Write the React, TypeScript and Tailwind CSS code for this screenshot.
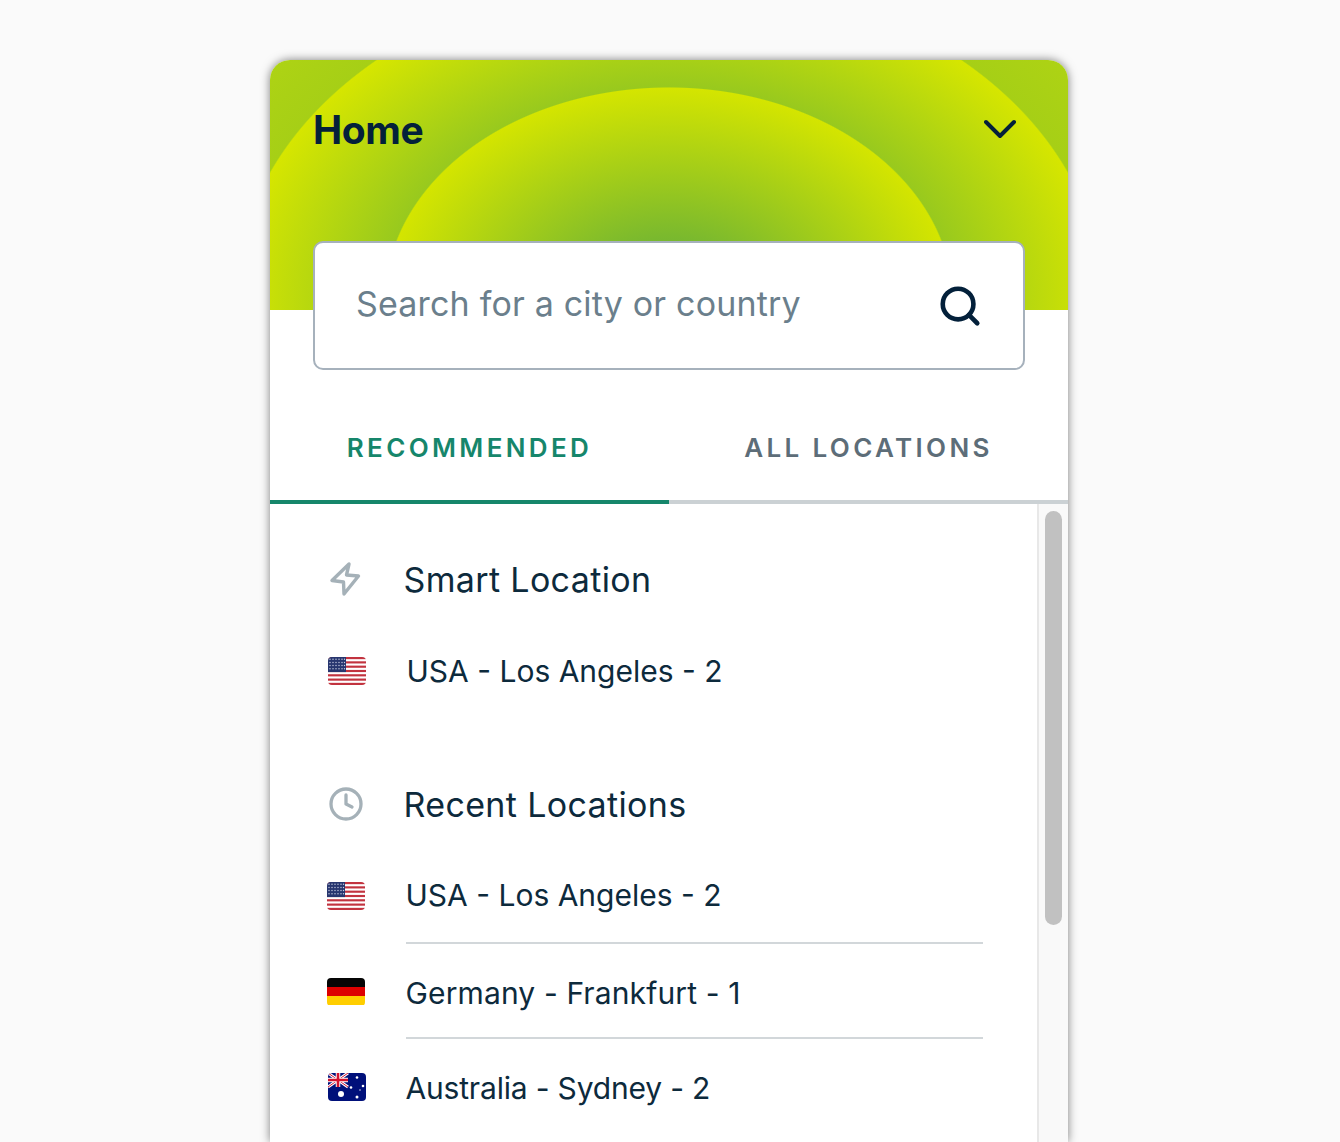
import { Clock, Search } from 'lucide-react'

function UsFlag() {
  const stripes = [0, 2, 4, 6, 8, 10, 12]
  return (
    <svg width="38" height="28" viewBox="0 0 38 26" preserveAspectRatio="none" className="rounded-[4px]">
      <rect width="38" height="26" fill="#fff" />
      {stripes.map((s) => (
        <rect key={s} y={s * 2} width="38" height="2" fill="#c2333f" />
      ))}
      <rect width="18" height="14" fill="#27366f" />
      {[2, 5, 8, 11].map((y) =>
        [2, 5, 8, 11, 14, 16.5].map((x) => <circle key={`${x}-${y}`} cx={x} cy={y} r="0.7" fill="#c9cfe2" />),
      )}
    </svg>
  )
}

function DeFlag() {
  return (
    <div className="flex h-[28px] w-[38px] flex-col overflow-hidden rounded-[4px]">
      <div className="flex-1 bg-[#050505]" />
      <div className="flex-1 bg-[#dd0000]" />
      <div className="flex-1 bg-[#ffce00]" />
    </div>
  )
}

function AuFlag() {
  return (
    <svg width="38" height="28" viewBox="0 0 38 28" className="rounded-[4px]">
      <rect width="38" height="28" fill="#00107a" />
      <path d="M0 0 20 14M20 0 0 14" stroke="#fff" strokeWidth="3" />
      <path d="M0 0 20 14M20 0 0 14" stroke="#d3122f" strokeWidth="1" />
      <path d="M10 0V14M0 7H20" stroke="#fff" strokeWidth="4.5" />
      <path d="M10 0V14M0 7H20" stroke="#d3122f" strokeWidth="2.6" />
      <circle cx="13" cy="21" r="3" fill="#fff" />
      <circle cx="29" cy="4.5" r="1.3" fill="#fff" />
      <circle cx="23" cy="14.5" r="1.3" fill="#fff" />
      <circle cx="35" cy="13" r="1.3" fill="#fff" />
      <circle cx="29" cy="24" r="1.5" fill="#fff" />
      <circle cx="32" cy="17" r="0.7" fill="#fff" />
    </svg>
  )
}

function Bolt() {
  return (
    <svg width="32" height="36" viewBox="0 0 32 36" fill="none">
      <path
        d="M20 3 3 19.5 14.5 21 15 33 29.5 15 17.5 14Z"
        stroke="#a5b1b8"
        strokeWidth="3.4"
        strokeLinejoin="round"
      />
    </svg>
  )
}

export default function App() {
  return (
    <div className="flex h-[1142px] justify-center overflow-hidden bg-[#fafafa] pt-[60px] pr-[2px] font-['Inter','Noto_Sans',sans-serif]">
      <div className="flex w-[798px] flex-col rounded-t-[20px] bg-white shadow-[0_0_10px_rgba(0,0,0,0.5)]">
        <div className="flex h-[250px] shrink-0 items-start justify-between rounded-t-[20px] bg-[radial-gradient(283px_212px_at_50%_240px,#5aa83a_0%,#78b82f_28%,#d4e500_100%,#98c91e_100.5%,#d6e600_153%,#a6cf16_153.5%,#b4d612_200%)] pt-[44px] pr-[52px] pl-[43px]">
          <h1 className="text-[39px] leading-[52px] font-bold tracking-[-0.4px] text-[#03203a]">Home</h1>
          <svg width="32" height="20" viewBox="0 0 32 20" fill="none" className="mt-[15px]">
            <path d="M2 3 16 17 30 3" stroke="#03203a" strokeWidth="4" strokeLinecap="round" strokeLinejoin="round" />
          </svg>
        </div>

        <div className="relative mx-[43px] -mt-[69px] flex h-[129px] shrink-0 items-center justify-between rounded-[10px] border-2 border-[#a6b1bc] bg-white pr-[40px] pl-[41px]">
          <span className="pb-[4px] text-[34px] tracking-[0.18px] text-[#6b7f8c]">Search for a city or country</span>
          <Search size={46} strokeWidth={2.4} color="#03203a" />
        </div>

        <div className="mt-[24px] flex h-[110px] shrink-0 text-[26px] font-semibold tracking-[3.35px]">
          <div className="flex flex-1 items-center justify-center border-b-4 border-[#16866b] text-[#16866b]">
            RECOMMENDED
          </div>
          <div className="flex flex-1 items-center justify-center border-b-4 border-[#cbd1d4] text-[#5d6d78]">
            ALL LOCATIONS
          </div>
        </div>

        <div className="flex min-h-0 flex-1">
          <div className="min-w-0 flex-1 pt-[46px] pr-[54px] pl-[57px] text-[#0d2a3c]">
            <div className="flex h-[58px] items-center text-[34px] tracking-[0.35px]">
              <div className="flex w-[76.5px] pl-[2px]">
                <Bolt />
              </div>
              Smart Location
            </div>
            <div className="flex h-[125px] items-center pt-px text-[30px]">
              <div className="flex w-[79.5px] pl-px">
                <UsFlag />
              </div>
              USA - Los Angeles - 2
            </div>
            <div className="mt-[42px] flex h-[58px] items-center text-[34px] tracking-[0.35px]">
              <div className="flex w-[76.5px] pl-px">
                <Clock size={36} strokeWidth={2.2} color="#a5b1b8" />
              </div>
              Recent Locations
            </div>
            <div className="flex h-[109px] items-center pt-[16px] text-[30px]">
              <div className="flex w-[78.5px]">
                <UsFlag />
              </div>
              USA - Los Angeles - 2
            </div>
            <div className="ml-[79px] h-[2px] bg-[#d2d7da]" />
            <div className="flex h-[93px] items-center pt-[5px] text-[30px] tracking-[0.13px]">
              <div className="-mt-[3px] flex w-[78.5px]">
                <DeFlag />
              </div>
              Germany - Frankfurt - 1
            </div>
            <div className="ml-[79px] h-[2px] bg-[#d2d7da]" />
            <div className="flex h-[98px] items-center text-[30px] tracking-[-0.18px]">
              <div className="-mt-[2px] flex w-[78.5px] pl-px">
                <AuFlag />
              </div>
              Australia - Sydney - 2
            </div>
          </div>
          <div className="w-[31px] shrink-0 border-l-2 border-[#e8e8e8] bg-[#f9f9f9] pt-[7px] pl-[6px]">
            <div className="h-[414px] w-[17px] rounded-[9px] bg-[#c1c1c1]" />
          </div>
        </div>
      </div>
    </div>
  )
}
